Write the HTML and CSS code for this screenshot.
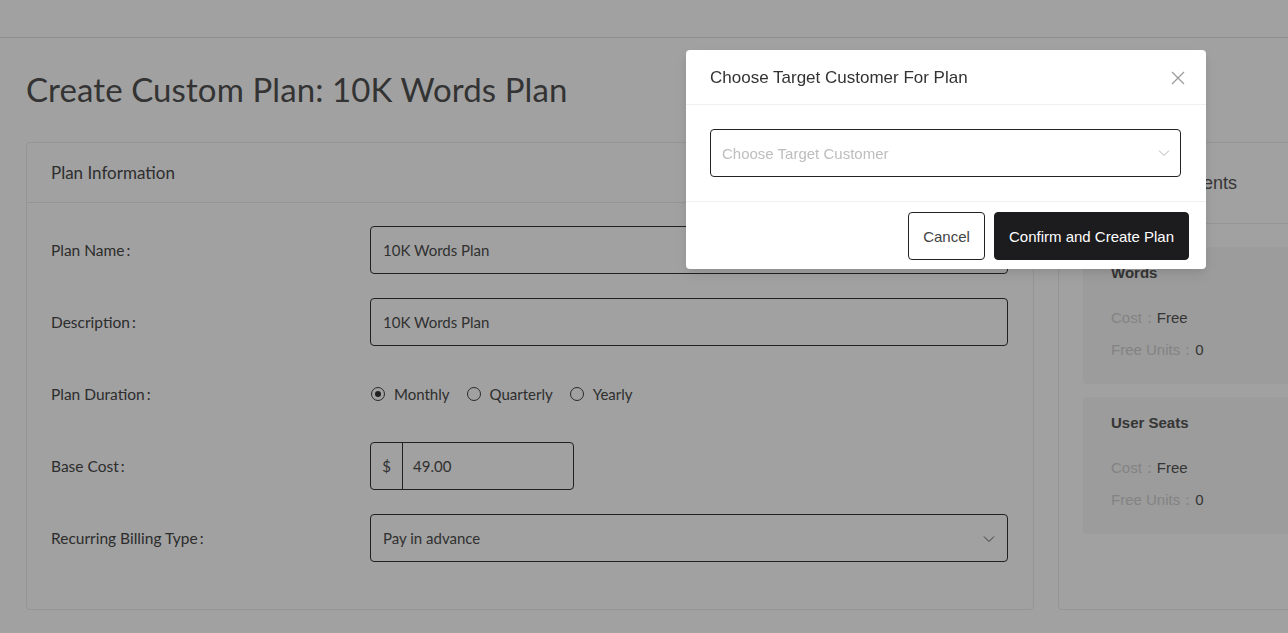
FILE: index.html
```html
<!DOCTYPE html>
<html>
<head>
<meta charset="utf-8">
<link rel="stylesheet" href="styles.css">
</head>
<body>
<div class="page">
  <header class="topbar"></header>
  <main class="main">
    <h1 class="title">Create Custom Plan: 10K Words Plan</h1>
    <div class="columns">
      <section class="card info">
        <div class="card-head">Plan Information</div>
        <div class="card-body">
          <div class="row">
            <label class="label">Plan Name<span class="colon">:</span></label>
            <div class="input wide">10K Words Plan</div>
          </div>
          <div class="row">
            <label class="label">Description<span class="colon">:</span></label>
            <div class="input wide">10K Words Plan</div>
          </div>
          <div class="row">
            <label class="label">Plan Duration<span class="colon">:</span></label>
            <div class="radios">
              <span class="radio checked"><i class="dot"></i>Monthly</span>
              <span class="radio"><i class="dot"></i>Quarterly</span>
              <span class="radio"><i class="dot"></i>Yearly</span>
            </div>
          </div>
          <div class="row">
            <label class="label">Base Cost<span class="colon">:</span></label>
            <div class="input cost"><span class="addon">$</span><span class="cost-val">49.00</span></div>
          </div>
          <div class="row">
            <label class="label">Recurring Billing Type<span class="colon">:</span></label>
            <div class="input wide select">Pay in advance
              <svg class="chev" width="12" height="8" viewBox="0 0 12 8"><path d="M1 1.5 L6 6.5 L11 1.5" fill="none" stroke="#5a5a5a" stroke-width="1"/></svg>
            </div>
          </div>
        </div>
      </section>
      <section class="card comps">
        <div class="card-head tall">Plan Components</div>
        <div class="comp-list">
          <div class="comp">
            <div class="comp-title">Words</div>
            <div class="comp-line first"><span class="k">Cost：</span><span class="v">Free</span></div>
            <div class="comp-line"><span class="k">Free Units：</span><span class="v">0</span></div>
          </div>
          <div class="comp">
            <div class="comp-title">User Seats</div>
            <div class="comp-line first"><span class="k">Cost：</span><span class="v">Free</span></div>
            <div class="comp-line"><span class="k">Free Units：</span><span class="v">0</span></div>
          </div>
        </div>
      </section>
    </div>
  </main>
</div>
<div class="overlay"></div>
<div class="modal">
  <div class="modal-head">
    <span class="modal-title">Choose Target Customer For Plan</span>
    <svg class="close" width="14" height="14" viewBox="0 0 14 14"><path d="M1 1 L13 13 M13 1 L1 13" stroke="#9a9a9a" stroke-width="1.2" fill="none"/></svg>
  </div>
  <div class="modal-body">
    <div class="mselect"><span class="ph">Choose Target Customer</span>
      <svg width="12" height="8" viewBox="0 0 12 8"><path d="M1 1.5 L6 6.5 L11 1.5" fill="none" stroke="#b5b5b5" stroke-width="1"/></svg>
    </div>
  </div>
  <div class="modal-foot">
    <button class="btn cancel">Cancel</button>
    <button class="btn primary">Confirm and Create Plan</button>
  </div>
</div>
</body>
</html>
```
FILE: styles.css
```css
html, body { margin: 0; padding: 0; }
body {
  background: #fff;
  font-family: Lato, "Liberation Sans", sans-serif;
  color: #4a4a4a;
  width: 1288px;
  height: 633px;
  overflow: hidden;
}
.page { width: 1288px; height: 633px; overflow: hidden; }
.topbar { height: 37px; border-bottom: 1px solid #e2e2e2; }
.main { padding: 0 0 0 26px; }
.title {
  margin: 31px 0 33px;
  font-size: 33px;
  line-height: 40px;
  font-weight: 400;
  color: #525252;
  letter-spacing: 0.1px;
}
.columns { display: flex; gap: 24px; align-items: stretch; }
.card {
  border: 1px solid #ececec;
  border-radius: 4px;
  background: #fff;
  box-sizing: border-box;
  flex: none;
}
.info { width: 1008px; height: 468px; }
.comps { width: 300px; height: 468px; }
.card-head {
  height: 59px;
  border-bottom: 1px solid #ececec;
  padding-left: 24px;
  display: flex;
  align-items: center;
  font-size: 17px;
  color: #4a4a4a;
}
.card-head.tall {
  height: 80px;
  font-family: "Liberation Sans", Arial, sans-serif;
  font-size: 18px;
  padding-left: 35px;
  color: #555;
}
.card-body {
  padding: 23px 25px 0 24px;
  display: flex;
  flex-direction: column;
  gap: 24px;
}
.row { display: flex; align-items: center; height: 48px; }
.label { width: 319px; flex: none; font-size: 15.5px; color: #484848; }
.colon { margin-left: 2px; }
.input {
  box-sizing: border-box;
  height: 48px;
  border: 1px solid #333;
  border-radius: 4px;
  display: flex;
  align-items: center;
  padding-left: 12px;
  font-size: 15px;
  color: #4e4e4e;
}
.wide { width: 638px; }
.select { justify-content: space-between; padding-right: 12px; }
.chev { margin-top: 1px; }
.cost { width: 204px; padding-left: 0; }
.addon {
  width: 32px;
  height: 100%;
  border-right: 1px solid #333;
  display: flex;
  align-items: center;
  justify-content: center;
  box-sizing: border-box;
}
.cost-val { padding-left: 10px; }
.radios { display: flex; gap: 17px; font-size: 15px; color: #4a4a4a; }
.radio { display: flex; align-items: center; gap: 9px; }
.radio:first-child { margin-left: 1px; }
.dot {
  width: 14px; height: 14px;
  border: 1px solid #444;
  border-radius: 50%;
  box-sizing: border-box;
  display: inline-block;
  position: relative;
}
.radio.checked .dot::after {
  content: "";
  position: absolute;
  left: 3px; top: 3px;
  width: 6px; height: 6px;
  border-radius: 50%;
  background: #333;
}
.comp-list {
  padding: 23px 0 0 24px;
  display: flex;
  flex-direction: column;
  gap: 13px;
}
.comp {
  background: #f7f7f7;
  border-radius: 4px;
  height: 137px;
  box-sizing: border-box;
  padding: 16px 28px 0;
  font-family: "Liberation Sans", Arial, sans-serif;
}
.comp-title { font-size: 15px; font-weight: 700; line-height: 20px; color: #555; }
.comp-line { font-size: 15px; line-height: 20px; margin-top: 12px; }
.comp-line.first { margin-top: 25px; }
.k { color: #d0d0d0; }
.v { color: #555; }
.overlay {
  position: fixed;
  inset: 0;
  background: rgba(0, 0, 0, 0.37);
}
.modal {
  position: fixed;
  left: 686px;
  top: 50px;
  width: 520px;
  height: 219px;
  background: #fff;
  border-radius: 4px;
  box-shadow: 0 6px 16px rgba(0,0,0,0.08), 0 3px 6px rgba(0,0,0,0.06);
  font-family: "Liberation Sans", Arial, sans-serif;
  display: flex;
  flex-direction: column;
}
.modal-head {
  height: 55px;
  box-sizing: border-box;
  border-bottom: 1px solid #f0f0f0;
  padding: 0 21px 0 24px;
  display: flex;
  align-items: center;
  justify-content: space-between;
}
.modal-title { font-size: 17px; color: #333; margin-top: 1px; }
.close { margin-top: 1px; }
.modal-body {
  padding: 24px 25px 24px 24px;
  border-bottom: 1px solid #f0f0f0;
}
.mselect {
  box-sizing: border-box;
  height: 48px;
  border: 1px solid #222;
  border-radius: 4px;
  padding: 0 10px 0 11px;
  display: flex;
  align-items: center;
  justify-content: space-between;
}
.ph { font-size: 15px; color: #bdbdbd; }
.modal-foot {
  display: flex;
  justify-content: flex-end;
  gap: 9px;
  padding: 10px 17px 0 0;
}
.btn {
  height: 48px;
  border-radius: 4px;
  font-family: "Liberation Sans", Arial, sans-serif;
  font-size: 15px;
  cursor: pointer;
}
.cancel {
  width: 77px;
  background: #fff;
  border: 1px solid #222;
  color: #444;
}
.primary {
  width: 195px;
  background: #1c1c1e;
  border: 1px solid #1c1c1e;
  color: #fff;
}
```
